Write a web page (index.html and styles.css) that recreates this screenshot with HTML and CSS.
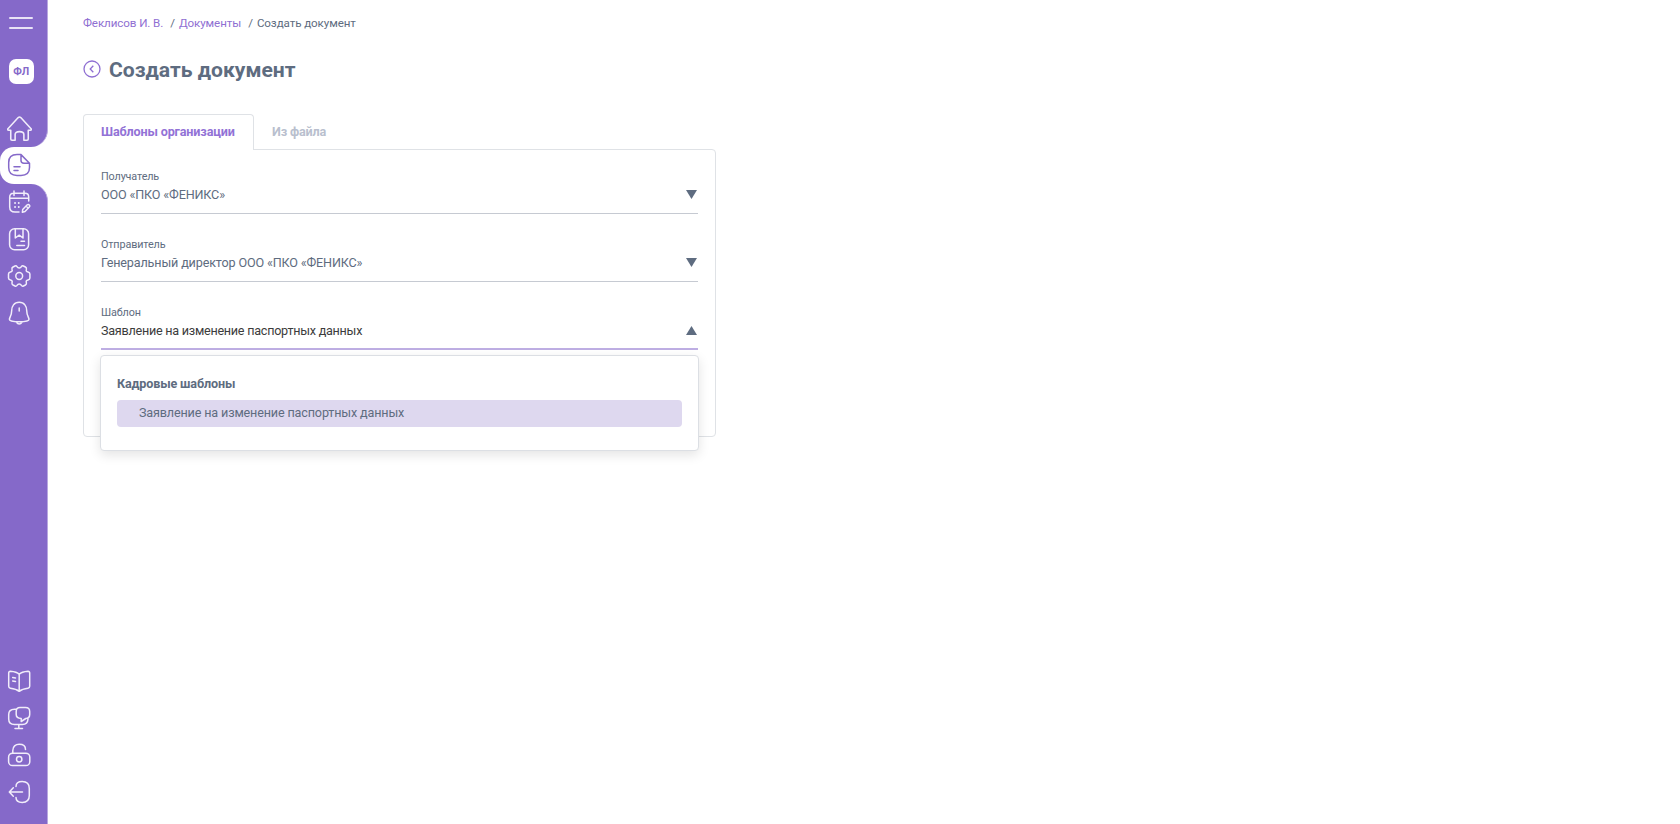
FILE: index.html
```html
<!DOCTYPE html>
<html lang="ru">
<head>
  <meta charset="UTF-8" />
  <title>Создать документ</title>
  <link rel="stylesheet" href="styles.css">
</head>
<body>

  <aside class="sidebar">
    <div class="sidebar-top">
      <button class="burger"><span></span><span></span></button>
      <div class="avatar">ФЛ</div>
      <a class="nav-item" href="#">
        <svg class="icon home" viewBox="0 0 24 24"><path d="M.9 12.200 10.800 1.500Q12 .4 13.200 1.500L23.100 12.200Q23.800 13.600 22.400 13.600H20.400V22Q20.400 23.200 19.200 23.200H16.200V17.800Q16.200 15 12 15T7.800 17.800V23.200H4.800Q3.600 23.200 3.600 22V13.600H1.600Q.2 13.600.9 12.200Z"/></svg>
      </a>
    </div>
    <a class="nav-item active" href="#">
      <svg class="icon" viewBox="0 0 24 24"><path d="M14 1.600H10C4.200 1.600 1.700 4 1.700 9.500V14.500C1.700 20 4.200 22.400 10 22.400H14C19.800 22.400 22.500 20 22.500 14.500V10.200ZM14 1.600V7.500Q14 10.200 17 10.200H22.500M7 13.700H13M7 17.500H11"/></svg>
    </a>
    <div class="sidebar-bottom">
      <nav>
        <a class="nav-item" href="#">
          <svg class="icon" viewBox="0 0 24 24"><path d="M7 1V5.500M17 1V5.500M2.700 8.300H21.700M21.700 11V7Q21.700 3.300 18 3.300H6.500Q2.700 3.300 2.700 7V17Q2.700 22 8 22H12M15.700 19.500 20 15Q21.300 14 22.300 15T22.300 17L18 21.500 15.400 22.200ZM19 16 21.300 18.300"/><path class="dots" d="M8 13H8.100M11.700 13H11.800M8 17H8.100M11.700 17H11.800"/></svg>
        </a>
        <a class="nav-item" href="#">
          <svg class="icon" viewBox="0 0 24 24"><rect x="2.600" y="1.700" width="19" height="21" rx="5"/><path d="M8.300 1.700V11L12.200 8.200 16 11V1.700M14 14.300H17.500M9.800 18.400H17.500"/></svg>
        </a>
        <a class="nav-item" href="#">
          <svg class="icon" viewBox="0 0 24 24"><circle cx="12.200" cy="12" r="3.400"/><path d="M12.200 4Q10.800 4 10 2.600 9.300 1.500 8 2L6 3Q4.600 3.800 5 5.200 5.800 7.600 3.400 8 1.500 8.300 1.500 10V14Q1.500 15.700 3.400 16 5.800 16.400 5 18.800 4.600 20.200 6 21L8 22Q9.300 22.500 10 21.400 10.800 20 12.200 20 13.600 20 14.400 21.400 15.100 22.500 16.400 22L18.400 21Q19.800 20.200 19.400 18.800 18.600 16.400 21 16 22.900 15.700 22.900 14V10Q22.900 8.300 21 8 18.600 7.600 19.400 5.200 19.800 3.800 18.400 3L16.400 2Q15.100 1.500 14.400 2.600 13.600 4 12.200 4Z"/></svg>
        </a>
        <a class="nav-item" href="#">
          <svg class="icon" viewBox="0 0 24 24"><path d="M12.200 1.300C7 1.300 4.700 5.500 4.700 9.500C4.700 14.500 2.400 16.600 2.400 18.300C2.400 20.500 7 20.800 12.200 20.800S22 20.500 22 18.300C22 16.600 19.700 14.500 19.700 9.500C19.700 5.500 17.400 1.300 12.200 1.300ZM9.200 21Q12.200 25 15.200 21M12.200 7V10"/></svg>
        </a>
      </nav>
      <nav>
        <a class="nav-item" href="#">
          <svg class="icon" viewBox="0 0 24 24"><path d="M12.200 5.200C9.800 2.700 6 2.400 3.400 2.200Q1.700 2.200 1.700 4V17.300Q1.700 19 3.400 19.200C7 19.600 10 20.500 12.200 22.300C14.400 20.500 17.400 19.600 21 19.200Q22.700 19 22.700 17.300V4Q22.700 2.200 21 2.200C18.400 2.400 14.600 2.700 12.200 5.200V22M5.700 8.600 8.500 9M5.700 12 8.500 12.400"/></svg>
        </a>
        <a class="nav-item" href="#">
          <svg class="icon" viewBox="0 0 24 24"><path d="M9.200 3.200H7.500Q1.700 3.200 1.700 8.500V13Q1.700 18.500 7.500 18.500H15.500Q20.600 18.500 21 13M11.800 18.500V22.500M8 22.500H15.500M13 1.500H18.500Q22.700 1.500 22.700 5.500V8.500Q22.700 12.200 18.800 12.500L14.200 15.500V12.500Q9.200 12.300 9.200 8.500V5.500Q9.200 1.500 13 1.500Z"/></svg>
        </a>
        <a class="nav-item" href="#">
          <svg class="icon" viewBox="0 0 24 24"><rect x="1.600" y="10.200" width="21.200" height="12.400" rx="4"/><circle cx="12.200" cy="16.300" r="2.700"/><path d="M5.800 10V7.500C5.800 3.500 8.500 1.300 12.200 1.300C15.800 1.300 18.500 3.200 18.500 6.500"/></svg>
        </a>
        <a class="nav-item" href="#">
          <svg class="icon" viewBox="0 0 24 24"><path d="M15.500 12H2.500M6.300 7.800 2.300 12 6.300 16.200M9 6.500C9 3.200 11 1.600 15.200 1.600C20 1.600 22.300 4.200 22.300 8.500V15.500C22.300 19.800 20 22.400 15.200 22.400C11 22.400 9 20.800 9 17.500"/></svg>
        </a>
      </nav>
    </div>
  </aside>

  <main>
    <div class="breadcrumbs">
      <a href="#">Феклисов И. В.</a><span class="sep">/</span><a href="#">Документы</a><span class="sep">/</span><span>Создать документ</span>
    </div>

    <div class="title">
      <svg class="back" viewBox="0 0 18 18"><circle cx="9" cy="9" r="8"/><path d="M10.300 5.800 7.200 9 10.300 12.200"/></svg>
      <h1>Создать документ</h1>
    </div>

    <div class="tabs">
      <div class="tab tab-active">Шаблоны организации</div>
      <div class="tab">Из файла</div>
    </div>

    <div class="panel">
      <div class="field">
        <label>Получатель</label>
        <div class="value">ООО «ПКО «ФЕНИКС»<svg class="arrow" viewBox="0 0 11 9"><path d="M0 0H11L5.500 9Z"/></svg></div>
      </div>
      <div class="field">
        <label>Отправитель</label>
        <div class="value">Генеральный директор ООО «ПКО «ФЕНИКС»<svg class="arrow" viewBox="0 0 11 9"><path d="M0 0H11L5.500 9Z"/></svg></div>
      </div>
      <div class="field open">
        <label>Шаблон</label>
        <div class="value">Заявление на изменение паспортных данных<svg class="arrow" viewBox="0 0 11 9"><path d="M0 9H11L5.500 0Z"/></svg></div>
        <div class="dropdown">
          <div class="group">Кадровые шаблоны</div>
          <div class="option">Заявление на изменение паспортных данных</div>
        </div>
      </div>
    </div>
  </main>

</body>
</html>
```

FILE: styles.css
```css
* {
  box-sizing: border-box;
}

body {
  margin: 0;
  display: flex;
  height: 100vh;
  overflow: hidden;
  font-family: Roboto, sans-serif;
  font-size: 12.6px;
  letter-spacing: -0.15px;
  color: #5e6c80;
  background: #fff;
}

a {
  color: #8f6fd2;
  text-decoration: none;
}

/* sidebar */
.sidebar {
  width: 48px;
  height: 100%;
  flex-shrink: 0;
  display: flex;
  flex-direction: column;
  background: linear-gradient(to right, #8569c9 50%, #fff 50%);
}

.sidebar-top,
.sidebar-bottom {
  background: #8569c9;
  border-right: 1px solid #b9a8e0;
}

.sidebar-top {
  height: 147px;
  padding-top: 17px;
  border-bottom-right-radius: 17px;
}

.sidebar-bottom {
  flex: 1;
  display: flex;
  flex-direction: column;
  justify-content: space-between;
  padding-bottom: 13px;
  border-top-right-radius: 17px;
}

.burger {
  display: flex;
  flex-direction: column;
  gap: 8px;
  width: 24px;
  margin: 0 0 0 9px;
  padding: 0;
  border: none;
  background: none;
}

.burger span {
  height: 2px;
  border-radius: 1px;
  background: #e9e3f6;
}

.avatar {
  width: 25px;
  height: 25px;
  margin: 30px 0 26px 8.6px;
  border-radius: 7px;
  background: #fff;
  color: #8569c9;
  font-size: 10.5px;
  font-weight: bold;
  line-height: 25px;
  text-align: center;
}

.nav-item {
  display: flex;
  align-items: center;
  height: 37px;
  padding: 0 0 0.4px 7px;
}

.nav-item.active {
  background: #fff;
  border-radius: 14px 0 0 14px;
}

.icon {
  width: 24px;
  height: 24px;
  fill: none;
  stroke: #f1edfa;
  stroke-width: 1.5;
  stroke-linecap: round;
  stroke-linejoin: round;
}

.icon.home {
  width: 25px;
  height: 25px;
}

.icon .dots {
  stroke-width: 1.8;
}

.active .icon {
  stroke: #8569c9;
}

/* content */
main {
  padding: 15px 0 0 35px;
}

.breadcrumbs {
  height: 16px;
  font-size: 11.6px;
  line-height: 16px;
  letter-spacing: -0.09px;
}

.sep {
  margin: 0 4px 0 7px;
}

.title {
  display: flex;
  align-items: center;
  gap: 8px;
  height: 30px;
  margin-top: 23px;
}

.back {
  width: 18px;
  height: 18px;
  fill: none;
  stroke: #8f6fd2;
  stroke-width: 1.3;
}

h1 {
  margin: 0;
  padding-top: 1px;
  font-size: 21.1px;
  line-height: 30px;
  letter-spacing: 0;
}

.tabs {
  display: flex;
  height: 35px;
  margin-top: 30px;
}

.tab {
  padding: 0 18px;
  line-height: 35px;
  font-weight: bold;
  color: #b9bfce;
}

.tab-active {
  position: relative;
  z-index: 1;
  height: 36px;
  width: 171px;
  padding: 0 17px;
  margin-bottom: -1px;
  border: 1px solid #dfe2e6;
  border-bottom: none;
  border-radius: 4px 4px 0 0;
  background: #fff;
  color: #9272d6;
  line-height: 33px;
}

.panel {
  width: 633px;
  height: 288px;
  padding: 18px 17px;
  border: 1px solid #dfe2e6;
  border-radius: 0 4px 4px 4px;
}

.field {
  position: relative;
  height: 68px;
}

.field label {
  display: block;
  font-size: 10.8px;
  line-height: 17px;
  height: 16px;
  letter-spacing: -0.13px;
}

.value {
  display: flex;
  justify-content: space-between;
  align-items: center;
  height: 30px;
  padding-bottom: 8px;
  border-bottom: 1px solid #c6cad2;
}

.arrow {
  width: 11px;
  height: 9px;
  margin-right: 1px;
  fill: #5e6c80;
}

.open .value {
  padding-bottom: 7px;
  color: #3c3c3c;
  border-bottom: 2px solid #beaee3;
  letter-spacing: -0.25px;
}

.dropdown {
  position: absolute;
  top: 51px;
  left: -1px;
  width: 599px;
  height: 96px;
  padding: 19px 16px;
  border: 1px solid #dcdfe4;
  border-radius: 4px;
  background: #fff;
  box-shadow: 0 4px 12px rgba(0,0,0,0.11);
}

.group {
  height: 25px;
  line-height: 18px;
  font-weight: bold;
}

.option {
  height: 27px;
  padding-left: 22px;
  border-radius: 4px;
  background: #ded8ef;
  line-height: 26px;
}
```
